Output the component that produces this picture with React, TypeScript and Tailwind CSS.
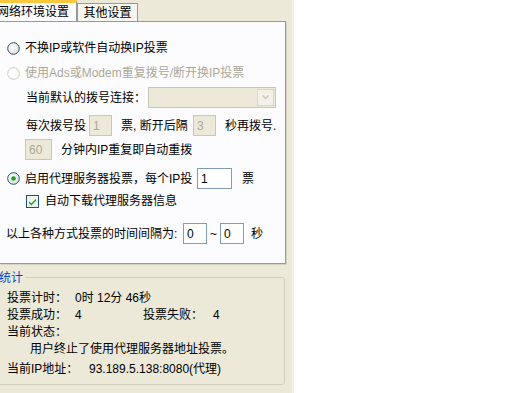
import React from "react";

const font = { fontFamily: '"Liberation Sans", "Noto Sans CJK SC", sans-serif' };

function Radio({ checked, disabled }: { checked?: boolean; disabled?: boolean }) {
  return (
    <svg width="13" height="13" viewBox="0 0 13 13" className="shrink-0">
      <defs>
        <radialGradient id="rg" cx="0.4" cy="0.4" r="0.7">
          <stop offset="0" stopColor="#ffffff" />
          <stop offset="1" stopColor="#dcdcd6" />
        </radialGradient>
      </defs>
      <circle cx="6.5" cy="6.5" r="5.8" fill={disabled ? "#ffffff" : "url(#rg)"} stroke={disabled ? "#cac8bb" : "#1c5180"} strokeWidth="1" />
      {checked && <circle cx="6.5" cy="6.5" r="2.3" fill="#21a121" />}
    </svg>
  );
}

function Check() {
  return (
    <svg width="13" height="13" viewBox="0 0 13 13" className="shrink-0">
      <rect x="0.5" y="0.5" width="12" height="12" fill="#f3f3ee" stroke="#1c5180" />
      <path d="M3 6.2 L5.3 8.6 L10 3.8 L10 5.8 L5.3 10.6 L3 8.2 Z" fill="#21a121" />
    </svg>
  );
}

function Input({ w, value, disabled }: { w: string; value: string; disabled?: boolean }) {
  return (
    <div
      className={`${w} h-[21px] shrink-0 border flex items-center pl-[3px] ${
        disabled ? "border-[#c9c7ba] bg-[#ece9d8] text-[#aca899]" : "border-[#7f9db9] bg-white text-black"
      }`}
    >
      {value}
    </div>
  );
}

export default function App() {
  return (
    <div className="w-[512px] h-[393px] bg-white flex text-[12px] text-black whitespace-nowrap" style={font}>
      <div className="w-[294px] h-full bg-[#ece9d8] flex flex-col border-r-2 border-[#f3f1e6] overflow-hidden">
        {/* tabs */}
        <div className="flex items-end h-[21px]">
          <div className="w-[79px] shrink-0 h-[21px] bg-[#fcfcfe] border-t-[3px] border-[#ffc83c] border-r border-r-[#919b9c] flex items-center -ml-[2px] z-10 overflow-hidden">
            <span className="-mt-[1px] -ml-[1px]">网络环境设置</span>
          </div>
          <div className="w-[61px] shrink-0 h-[18px] bg-[#f7f7f1] border border-[#919b9c] border-b-0 flex items-center justify-center">
            其他设置
          </div>
        </div>
        {/* panel */}
        <div className="w-[286px] h-[243px] shrink-0 bg-[#fcfcfe] border-r border-b border-t border-[#919b9c] flex flex-col pl-[7px] pt-[18px] shadow-[1px_1px_0_#d5d2c6]">
          <div className="flex items-center gap-[5px] h-[16px]">
            <Radio />
            <span>不换IP或软件自动换IP投票</span>
          </div>
          <div className="flex items-center gap-[5px] h-[16px] mt-[9px] text-[#aca899]">
            <Radio disabled />
            <span>使用Ads或Modem重复拨号/断开换IP投票</span>
          </div>
          <div className="flex items-center ml-[19px] mt-[6px] h-[21px]">
            <span className="w-[122px]">当前默认的拨号连接：</span>
            <div className="w-[128px] h-[21px] bg-[#ece9d8] border border-[#c9c7ba] flex justify-end items-center">
              <div className="w-[17px] h-[17px] mr-[1px] bg-[#f2f0e7] border border-[#d9d6c8] flex items-center justify-center">
                <svg width="7" height="5" viewBox="0 0 7 5"><path d="M0.5 0.5 L3.5 3.5 L6.5 0.5" stroke="#c9c7ba" strokeWidth="1.5" fill="none" /></svg>
              </div>
            </div>
          </div>
          <div className="flex items-center ml-[19px] mt-[7px] h-[21px]">
            <span className="w-[63px]">每次拨号投</span>
            <Input w="w-[23px]" value="1" disabled />
            <span className="ml-[9px] w-[72px]">票, 断开后隔</span>
            <Input w="w-[23px]" value="3" disabled />
            <span className="ml-[9px]">秒再拨号.</span>
          </div>
          <div className="flex items-center ml-[18px] mt-[3px] h-[21px]">
            <Input w="w-[27px]" value="60" disabled />
            <span className="ml-[9px]">分钟内IP重复即自动重拨</span>
          </div>
          <div className="flex items-center gap-[5px] mt-[8px] h-[21px]">
            <Radio checked />
            <span className="w-[167px] shrink-0">启用代理服务器投票，每个IP投</span>
            <Input w="w-[35px]" value="1" />
            <span className="ml-[5px]">票</span>
          </div>
          <div className="flex items-center gap-[6px] ml-[19px] mt-[4px] h-[16px]">
            <Check />
            <span>自动下载代理服务器信息</span>
          </div>
          <div className="flex items-center -ml-[1px] mt-[14px] h-[21px]">
            <span className="w-[177px]">以上各种方式投票的时间间隔为:</span>
            <Input w="w-[24px]" value="0" />
            <span className="w-[13px] text-center">~</span>
            <Input w="w-[24px]" value="0" />
            <span className="ml-[7px]">秒</span>
          </div>
        </div>
        {/* group box */}
        <div className="relative mt-[13px] w-[287px] h-[108px] shrink-0 -ml-[2px] border border-[#d0d0bf] rounded-[3px]">
          <span className="absolute -top-[9px] left-0 bg-[#ece9d8] pr-[2px] text-[#0046d5]">统计</span>
          <div className="flex flex-col pl-[8px] pt-[11px]">
            <div className="flex items-center h-[17px]">
              <span className="w-[68px]">投票计时：</span>
              <span>0时 12分 46秒</span>
            </div>
            <div className="flex items-center h-[17px]">
              <span className="w-[68px]">投票成功：</span>
              <span className="w-[68px]">4</span>
              <span className="w-[70px]">投票失败：</span>
              <span>4</span>
            </div>
            <div className="flex items-center h-[17px]">当前状态：</div>
            <div className="flex items-center h-[18px] pl-[23px]">用户终止了使用代理服务器地址投票。</div>
            <div className="flex items-center h-[19px] pt-[2px]">
              <span className="w-[82px]">当前IP地址：</span>
              <span>93.189.5.138:8080(代理)</span>
            </div>
          </div>
        </div>
      </div>
    </div>
  );
}
